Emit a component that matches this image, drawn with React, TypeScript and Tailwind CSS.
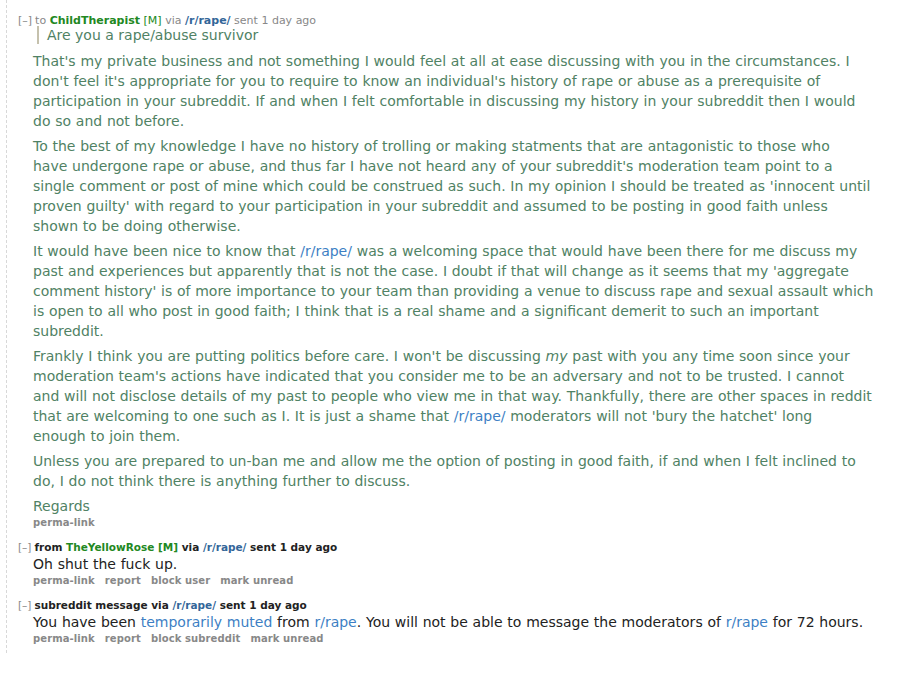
import React from "react";

const font = { fontFamily: '"DejaVu Sans", Verdana, sans-serif' };

function Toggle() {
  return <span className="font-normal text-[#888] mr-[3px]">[–]</span>;
}

function Buttons({ items }: { items: string[] }) {
  return (
    <div className="flex gap-[10px] text-[10px] leading-[14px] font-bold text-[#888] ml-[15px] tracking-[0.1px]">
      {items.map((i, index) => (
        <span key={index}>{i}</span>
      ))}
    </div>
  );
}

function Link({ children }: { children: React.ReactNode }) {
  return <span className="text-[#3d7fc4]">{children}</span>;
}

// line breaks follow the original message layout
const paras: React.ReactNode[][] = [
  [
    "That's my private business and not something I would feel at all at ease discussing with you in the circumstances. I",
    "don't feel it's appropriate for you to require to know an individual's history of rape or abuse as a prerequisite of",
    "participation in your subreddit. If and when I felt comfortable in discussing my history in your subreddit then I would",
    "do so and not before.",
  ],
  [
    "To the best of my knowledge I have no history of trolling or making statments that are antagonistic to those who",
    "have undergone rape or abuse, and thus far I have not heard any of your subreddit's moderation team point to a",
    "single comment or post of mine which could be construed as such. In my opinion I should be treated as 'innocent until",
    "proven guilty' with regard to your participation in your subreddit and assumed to be posting in good faith unless",
    "shown to be doing otherwise.",
  ],
  [
    <>
      It would have been nice to know that <Link>/r/rape/</Link> was a welcoming space that would have been there for me
      discuss my
    </>,
    "past and experiences but apparently that is not the case. I doubt if that will change as it seems that my 'aggregate",
    "comment history' is of more importance to your team than providing a venue to discuss rape and sexual assault which",
    "is open to all who post in good faith; I think that is a real shame and a significant demerit to such an important",
    "subreddit.",
  ],
  [
    <>
      Frankly I think you are putting politics before care. I won't be discussing <em>my</em> past with you any time soon
      since your
    </>,
    "moderation team's actions have indicated that you consider me to be an adversary and not to be trusted. I cannot",
    "and will not disclose details of my past to people who view me in that way. Thankfully, there are other spaces in reddit",
    <>
      that are welcoming to one such as I. It is just a shame that <Link>/r/rape/</Link> moderators will not 'bury the
      hatchet' long
    </>,
    "enough to join them.",
  ],
  [
    "Unless you are prepared to un-ban me and allow me the option of posting in good faith, if and when I felt inclined to",
    "do, I do not think there is anything further to discuss.",
  ],
  ["Regards"],
];

export default function App() {
  return (
    <div className="min-h-[691px] bg-white pl-[6px]" style={font}>
      <div className="border-l border-dashed border-[#d8d8d8] pl-[11px] pt-[14px] pb-[7px]">
        {/* sent message */}
        <div>
          <div className="text-[11px] leading-[14px] text-[#888]">
            <Toggle />
            to <span className="font-bold text-[#228822]">ChildTherapist</span>{" "}
            <span className="text-[#228822]">[M]</span> via{" "}
            <span className="font-bold text-[#336699]">/r/rape/</span> sent 1 day ago
          </div>
          <div className="ml-[19px] -mt-[2px] border-l-2 border-[#c5c1ad] pl-[8px] text-[14px] leading-[18px] text-[#508264]">
            Are you a rape/abuse survivor
          </div>
          <div className="ml-[15px] mt-[7px] w-[880px] text-[14px] leading-[20px] text-[#508264] [word-spacing:0.3px]">
            {paras.map((p, index) => (
              <p key={index} className="mt-[5px] whitespace-nowrap">
                {p.map((line, li) => (
                  <React.Fragment key={li}>
                    {li > 0 && <br />}
                    {line}
                  </React.Fragment>
                ))}
              </p>
            ))}
          </div>
          <Buttons items={["perma-link"]} />
        </div>

        {/* reply */}
        <div className="mt-[10px]">
          <div className="text-[10.5px] leading-[14px] font-bold text-[#222]">
            <Toggle />
            from <span className="text-[#228822]">TheYellowRose</span>{" "}
            <span className="text-[#228822]">[M]</span> via <span className="text-[#336699]">/r/rape/</span> sent 1 day
            ago
          </div>
          <div className="ml-[15px] text-[14px] leading-[20px] text-[#222] [word-spacing:0.3px]">Oh shut the fuck up.</div>
          <Buttons items={["perma-link", "report", "block user", "mark unread"]} />
        </div>

        {/* subreddit message */}
        <div className="mt-[10px]">
          <div className="text-[10.5px] leading-[14px] font-bold text-[#222]">
            <Toggle />
            subreddit message via <span className="text-[#336699]">/r/rape/</span> sent 1 day ago
          </div>
          <div className="ml-[15px] text-[14px] leading-[20px] text-[#222] [word-spacing:0.3px]">
            You have been <Link>temporarily muted</Link> from <Link>r/rape</Link>. You will not be able to message the
            moderators of <Link>r/rape</Link> for 72 hours.
          </div>
          <Buttons items={["perma-link", "report", "block subreddit", "mark unread"]} />
        </div>
      </div>
    </div>
  );
}
